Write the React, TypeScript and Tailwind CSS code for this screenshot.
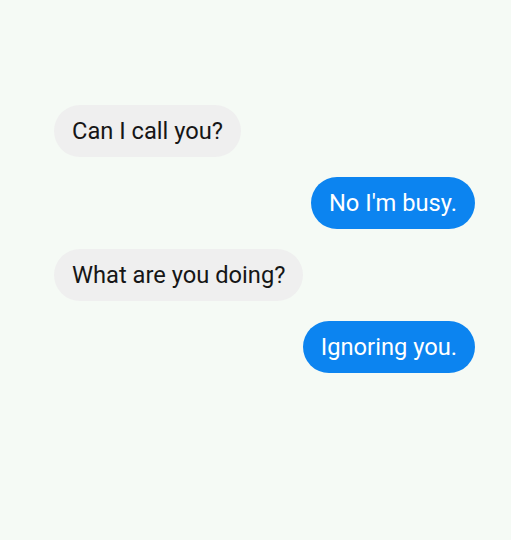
const messages = [
  { text: "Can I call you?", mine: false },
  { text: "No I'm busy.", mine: true },
  { text: "What are you doing?", mine: false },
  { text: "Ignoring you.", mine: true },
];

export default function App() {
  return (
    <div className="h-[540px] w-[511px] bg-[#f5faf5] font-['Roboto',sans-serif]">
      <div className="flex flex-col gap-5 pl-[54px] pr-[36px] pt-[105px]">
        {messages.map((m) => (
          <div key={m.text} className={m.mine ? "flex justify-end" : "flex justify-start"}>
            <div
              className={
                m.mine
                  ? "flex h-[52px] items-center rounded-full bg-[#0c84f0] px-[18px] pt-px text-[23.7px] text-white"
                  : "flex h-[52px] items-center rounded-full bg-[#efefef] px-[18px] pt-px text-[23.7px] text-[#161616]"
              }
            >
              {m.text}
            </div>
          </div>
        ))}
      </div>
    </div>
  );
}
